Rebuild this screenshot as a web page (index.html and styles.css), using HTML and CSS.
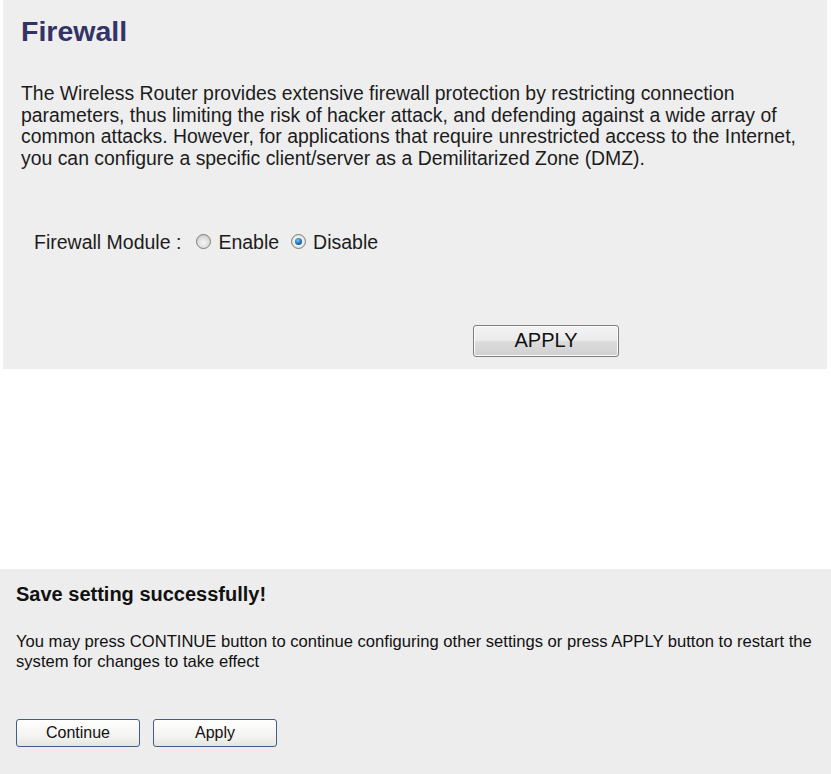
FILE: index.html
```html
<!DOCTYPE html>
<html>
  <head>
    <meta name="viewport" content="width=device-width, initial-scale=1.0" />
    <title>Firewall</title>
    <link rel="stylesheet" href="styles.css">
  </head>
  <body>
    <div class="panel firewall">
      <h1 class="title">Firewall</h1>
      <p class="intro">
        The Wireless Router provides extensive firewall protection by restricting connection
        parameters, thus limiting the risk of hacker attack, and defending against a wide array of
        common attacks. However, for applications that require unrestricted access to the Internet,
        you can configure a specific client/server as a Demilitarized Zone (DMZ).
      </p>
      <form class="module" action="">
        <div class="module-row">
          <span class="label">Firewall Module :</span>
          <label class="choice"><input type="radio" name="fw" value="on" /> Enable</label>
          <label class="choice"><input type="radio" name="fw" value="off" checked /> Disable</label>
        </div>
        <div class="apply-row">
          <button type="button" class="apply">APPLY</button>
        </div>
      </form>
    </div>

    <div class="panel saved">
      <h2 class="saved-title">Save setting successfully!</h2>
      <p class="saved-text">
        You may press CONTINUE button to continue configuring other settings or press APPLY button to restart the
        system for changes to take effect
      </p>
      <div class="saved-buttons">
        <button type="button" class="small-btn">Continue</button>
        <button type="button" class="small-btn">Apply</button>
      </div>
    </div>
  </body>
</html>
```

FILE: styles.css
```css
body {
  margin: 0;
  background: #fff;
  font-family: "Liberation Sans", Arial, sans-serif;
  color: #1c1c1c;
}

.panel {
  box-sizing: border-box;
}

/* top panel */
.firewall {
  margin-left: 3px;
  width: 824px;
  height: 369px;
  padding: 15px 0 0 18px;
  background: #eeeeee;
}

.title {
  margin: 0;
  font-size: 28.5px;
  line-height: 32px;
  font-weight: bold;
  color: #333366;
}

.intro {
  margin: 36px 0 0 0;
  width: 800px;
  font-size: 19.4px;
  line-height: 21.7px;
}

.module {
  margin: 0;
}

.module-row {
  display: flex;
  align-items: center;
  margin: 61px 0 0 13px;
  font-size: 19.5px;
  line-height: 22px;
}

.label {
  margin-right: 15px;
}

.choice {
  display: flex;
  align-items: center;
  margin-right: 12px;
}

.choice input {
  appearance: none;
  -webkit-appearance: none;
  width: 15px;
  height: 15px;
  margin: 0 7px 0 0;
  border: 1px solid #7c7d7d;
  border-radius: 50%;
  box-sizing: border-box;
  background: radial-gradient(circle at 50% 60%, #f6f6f6 0%, #dedede 50%, #bdbdbd 100%);
  position: relative;
}

.choice input:checked {
  background: radial-gradient(circle, #ffffff 0%, #f0f0f0 50%, #c4c4c4 100%);
}

.choice input:checked::after {
  content: "";
  position: absolute;
  left: 3px;
  top: 3px;
  width: 7px;
  height: 7px;
  border-radius: 50%;
  background: radial-gradient(circle at 40% 35%, #74c6f6 0%, #1f74be 50%, #0c386a 100%);
}

.apply-row {
  margin: 72px 0 0 452px;
}

.apply {
  width: 146px;
  height: 32px;
  padding: 0;
  border: 1px solid #7d7d7d;
  border-radius: 3px;
  box-shadow: inset 0 0 0 1px #fbfbfb;
  background: linear-gradient(#f3f3f3 0%, #ebebeb 48%, #dcdcdc 52%, #d0d0d0 100%);
  font-family: "Liberation Sans", Arial, sans-serif;
  font-size: 20px;
  color: #111;
}

/* bottom panel */
.saved {
  margin-top: 200px;
  width: 831px;
  height: 205px;
  padding: 14px 0 0 16px;
  background: #ededed;
  color: #111;
}

.saved-title {
  margin: 0;
  font-size: 20px;
  line-height: 23px;
  font-weight: bold;
}

.saved-text {
  margin: 26px 0 0 0;
  width: 805px;
  font-size: 16.6px;
  line-height: 19.5px;
}

.saved-buttons {
  display: flex;
  gap: 13px;
  margin-top: 48px;
}

.small-btn {
  width: 124px;
  height: 28px;
  padding: 0;
  border: 1px solid #3f5f8a;
  border-radius: 3px;
  background: linear-gradient(#ffffff, #f1f1ee 70%, #e4e4e0);
  font-family: "Liberation Sans", Arial, sans-serif;
  font-size: 16px;
  color: #111;
}
```
